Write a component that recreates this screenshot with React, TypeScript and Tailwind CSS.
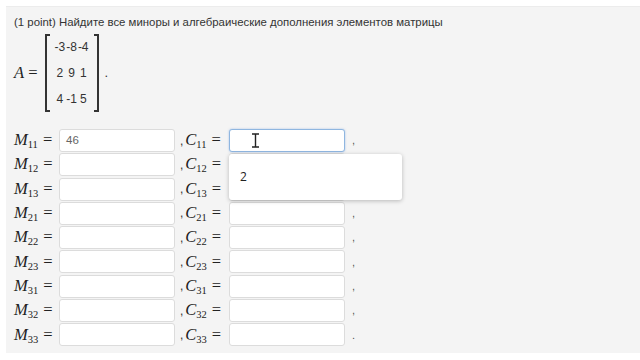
const rows = ['11', '12', '13', '21', '22', '23', '31', '32', '33'];

function Sym({ letter, sub }: { letter: string; sub: string }) {
  return (
    <span className="font-['Liberation_Serif',serif] text-[16.5px] text-[#222]">
      <i>{letter}</i>
      <span className="text-[10.5px] relative top-[3px]">{sub}</span>
      <span className="ml-[5px]">=</span>
    </span>
  );
}

export default function App() {
  return (
    <div className="w-[640px] h-[360px] bg-white pt-[6px] pl-[6px] overflow-hidden font-['Liberation_Sans',Arial,sans-serif]">
      <div className="relative bg-[#f4f4f4] h-[347px] border-t border-[#ececec] pl-[8px] pt-[7px] text-[#333]">
        <p className="text-[11.4px] leading-[16px]">
          (1 point) Найдите все миноры и алгебраические дополнения элементов матрицы
        </p>

        {/* matrix */}
        <div className="flex items-center mt-[3px] h-[80px]">
          <span className="font-['Liberation_Serif',serif] text-[16.5px] text-[#222] mr-[7px]">
            <i>A</i> =
          </span>
          <div className="w-[5px] h-[78px] border-l-2 border-t-2 border-b-2 border-[#333]" />
          <div className="flex flex-col justify-between h-[70px] px-[5px] text-[12px] text-[#333]">
            <div className="flex gap-[1px]"><span>-3</span><span>-8</span><span>-4</span></div>
            <div className="flex gap-[5px] pl-[2px]"><span>2</span><span>9</span><span>1</span></div>
            <div className="flex gap-[3px] pl-[2px]"><span>4</span><span>-1</span><span>5</span></div>
          </div>
          <div className="w-[5px] h-[78px] border-r-2 border-t-2 border-b-2 border-[#333]" />
          <span className="ml-[6px] text-[13px]">.</span>
        </div>

        {/* rows */}
        <div className="flex flex-col gap-[1.3px] mt-[16px]">
          {rows.map((r, i) => (
            <div key={r} className="flex items-center h-[23px]">
              <div className="w-[45px]">
                <Sym letter="M" sub={r} />
              </div>
              <div className="w-[116px] h-[23px] bg-white border border-[#dcdcdc] rounded-[3px] flex items-center pl-[6px] text-[11.5px] text-[#666]">
                {i === 0 ? '46' : ''}
              </div>
              <div className="w-[54px] pl-[5px] flex items-center">
                <span className="text-[12px] mr-[2px]">,</span>
                <Sym letter="C" sub={r} />
              </div>
              <div
                className={
                  'relative w-[116px] h-[23px] bg-white rounded-[3px] border ' +
                  (i === 0 ? 'border-[#8fb6e0] shadow-[0_0_2px_rgba(80,140,220,0.5)]' : 'border-[#dcdcdc]')
                }
              >
                {i === 0 && (
                  <svg className="absolute left-[21px] top-[3px]" width="9" height="15" viewBox="0 0 9 15">
                    <path d="M1 1h7M4.5 1v13M1 14h7" stroke="#222" strokeWidth="1.4" fill="none" />
                  </svg>
                )}
              </div>
              <span className="ml-[7px] text-[11px] text-[#555]">{i === 8 ? '.' : ','}</span>
            </div>
          ))}
        </div>

        {/* autocomplete popup */}
        <div className="absolute left-[223px] top-[147px] w-[173px] h-[46px] bg-white rounded-[3px] shadow-[0_1px_4px_rgba(0,0,0,0.25)] flex items-center pl-[11px] text-[12px] text-[#222] font-['Open_Sans',sans-serif]">
          2
        </div>
      </div>
    </div>
  );
}
